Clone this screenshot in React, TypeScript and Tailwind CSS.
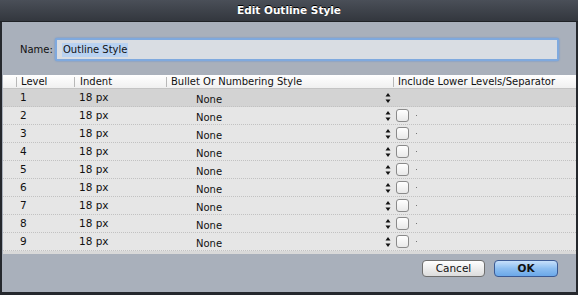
import React from 'react'

const font = { fontFamily: '"DejaVu Sans", "Liberation Sans", sans-serif' }

const Stepper: React.FC = () => (
    <svg width="6" height="12" viewBox="0 0 6 12" className="shrink-0">
        <path d="M3 1 L5.5 4.5 L0.5 4.5 Z" fill="#111" />
        <path d="M3 11 L5.5 7.5 L0.5 7.5 Z" fill="#111" />
    </svg>
)

const levels = [1, 2, 3, 4, 5, 6, 7, 8, 9]

export default function App() {
    return (
        <div className="w-[578px] h-[295px] bg-[#25282d] flex flex-col text-[10px] text-[#111]" style={font}>
            {/* title bar */}
            <div className="h-[22px] shrink-0 bg-gradient-to-b from-[#4a4f58] to-[#33373e] border-b border-[#1f2226] flex items-center justify-center">
                <span className="text-white font-bold text-[10.5px] [text-shadow:0_-1px_0_#000]">Edit Outline Style</span>
            </div>

            <div className="flex-1 mx-[2px] mb-[3px] bg-[#a9b0bb] flex flex-col">
                {/* name field */}
                <div className="flex items-center mt-[16px] h-[23px]">
                    <span className="w-[53px] pl-[18px] text-[#111]">Name:</span>
                    <div className="w-[504px] h-[23px] rounded-[2px] bg-[#d9dde3] border-2 border-[#7fa9de] shadow-[0_0_2px_#5c8fd0] flex items-center pl-[5px]">
                        <span className="bg-[#b9d2f1] px-[1px] leading-[14px]">Outline Style</span>
                    </div>
                </div>

                {/* table */}
                <div className="mt-[14px] ml-[1px] w-[573px] bg-[#e6e6e6] border-b-[3px] border-[#d9d9d9]">
                    <div className="flex h-[14px] bg-gradient-to-b from-[#ffffff] to-[#f0f0f0] border-b border-[#c4c4c4] items-center leading-none">
                        <div className="w-[13px] h-full" />
                        <div className="w-[58px] border-l border-[#b8b8b8] h-[10px] flex items-center pl-[4px]">Level</div>
                        <div className="w-[92px] border-l border-[#b8b8b8] h-[10px] flex items-center pl-[5px]">Indent</div>
                        <div className="w-[227px] border-l border-[#b8b8b8] h-[10px] flex items-center pl-[4px]">Bullet Or Numbering Style</div>
                        <div className="flex-1 border-l border-[#b8b8b8] h-[10px] flex items-center pl-[4px]">Include Lower Levels/Separator</div>
                    </div>
                    {levels.map((lvl) => (
                        <div
                            key={lvl}
                            className={
                                'flex h-[18px] items-center border-b border-dotted border-[#c2c2c2] ' +
                                (lvl === 1 ? 'bg-[#d3d3d3]' : 'bg-[#e6e6e6]')
                            }
                        >
                            <div className="w-[13px]" />
                            <div className="w-[58px] pl-[4px] text-[10.5px]">{lvl}</div>
                            <div className="w-[92px] pl-[5px] text-[10.5px]">18 px</div>
                            <div className="w-[227px] flex items-center">
                                <span className="pl-[30px] pt-[3px] flex-1">None</span>
                                <span className="mr-[2px]"><Stepper /></span>
                            </div>
                            <div className="flex-1 flex items-center pl-[3px]">
                                {lvl > 1 && (
                                    <>
                                        <div className="w-[13px] h-[13px] rounded-[3px] border border-[#8a8a8a] bg-gradient-to-b from-[#ffffff] to-[#e9e9e9]" />
                                        <span className="ml-[7px] w-[1px] h-[1px] bg-[#777]" />
                                    </>
                                )}
                            </div>
                        </div>
                    ))}
                </div>

                {/* buttons */}
                <div className="flex justify-end gap-[9px] mt-[6px] pr-[18px]">
                    <button className="w-[63px] h-[17px] rounded-[4px] border border-[#6f6f6f] bg-gradient-to-b from-[#ffffff] to-[#dcdcdc] text-[10.5px] leading-none text-[#111]" style={font}>Cancel</button>
                    <button className="w-[64px] h-[17px] rounded-[4px] border border-[#3b5a94] bg-gradient-to-b from-[#c7e0fb] via-[#8dbef0] to-[#6ba8e9] text-[10.5px] leading-none font-bold text-[#111]" style={font}>OK</button>
                </div>
            </div>
        </div>
    )
}
